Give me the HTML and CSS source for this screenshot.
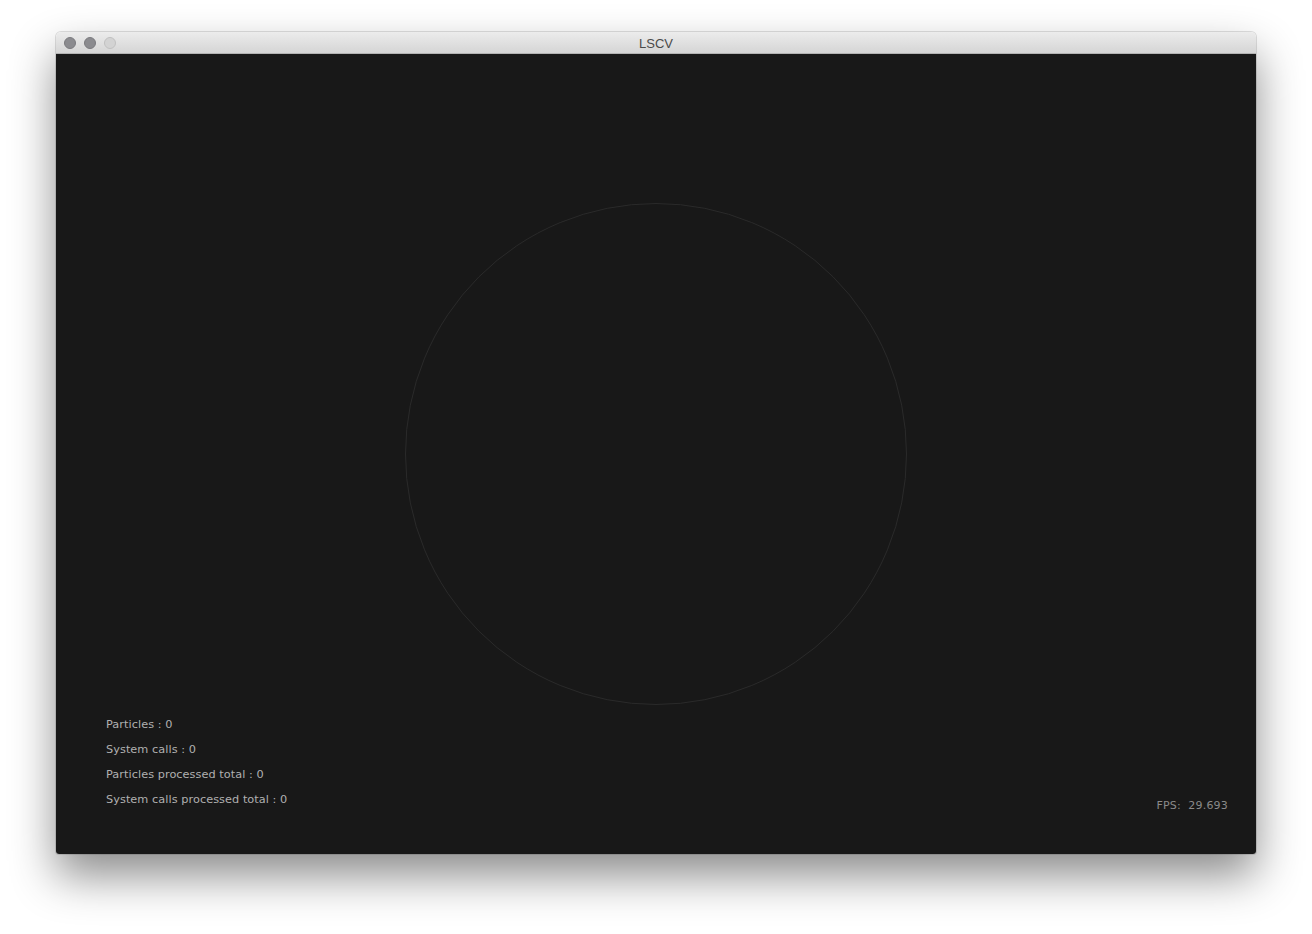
FILE: index.html
```html
<!DOCTYPE html>
<html>
<head>
<meta charset="utf-8">
<title>LSCV</title>
<link rel="stylesheet" href="styles.css">
</head>
<body>
<div class="window">
  <div class="titlebar">
    <div class="lights">
      <span class="light"></span>
      <span class="light"></span>
      <span class="light off"></span>
    </div>
    <div class="title">LSCV</div>
  </div>
  <div class="canvas">
    <div class="ring"></div>
    <div class="stats">
      <div class="stat">Particles : 0</div>
      <div class="stat">System calls : 0</div>
      <div class="stat">Particles processed total : 0</div>
      <div class="stat">System calls processed total : 0</div>
    </div>
    <div class="fps">FPS:  29.693</div>
  </div>
</div>
</body>
</html>
```

FILE: styles.css
```css
html, body {
  margin: 0;
  padding: 0;
  background: #ffffff;
}
body {
  width: 1312px;
  height: 934px;
  overflow: hidden;
  padding-top: 32px;
  box-sizing: border-box;
}
.window {
  margin-left: 56px;
  width: 1200px;
  height: 822px;
  display: flex;
  flex-direction: column;
  border-radius: 5px 5px 3px 3px;
  box-shadow: 0 22px 45px rgba(0, 0, 0, 0.45), 0 0 0 1px rgba(0,0,0,0.12);
  overflow: hidden;
}
.titlebar {
  height: 22px;
  flex: none;
  position: relative;
  background: linear-gradient(#ececec, #d5d5d5);
  border-bottom: 1px solid #b3b3b3;
  box-sizing: border-box;
  display: flex;
  align-items: center;
  justify-content: center;
}
.lights {
  position: absolute;
  left: 8px;
  top: 5px;
  display: flex;
  gap: 8px;
}
.light {
  width: 12px;
  height: 12px;
  border-radius: 50%;
  background: #8b8b8f;
  box-sizing: border-box;
  border: 1px solid #7a7a7e;
}
.light.off {
  background: #d3d3d3;
  border-color: #c0c0c0;
}
.title {
  font-family: "Liberation Sans", Arial, sans-serif;
  font-size: 13px;
  color: #4a4a4a;
  line-height: 22px;
  padding-top: 2px;
}
.canvas {
  flex: 1;
  position: relative;
  background: #181818;
}
.ring {
  position: absolute;
  left: 349px;
  top: 149px;
  width: 502px;
  height: 502px;
  box-sizing: border-box;
  border: 1px solid #2a2a2a;
  border-radius: 50%;
}
.stats {
  position: absolute;
  left: 50px;
  top: 658px;
  display: flex;
  flex-direction: column;
}
.stat {
  font-family: "DejaVu Sans", sans-serif;
  font-size: 11.3px;
  letter-spacing: 0.05px;
  line-height: 25px;
  color: #b0b0b0;
}
.fps {
  position: absolute;
  right: 28px;
  top: 744px;
  white-space: pre;
  font-family: "DejaVu Sans", sans-serif;
  font-size: 11px;
  letter-spacing: 0.2px;
  line-height: 16px;
  color: #8a8a8a;
}
```
